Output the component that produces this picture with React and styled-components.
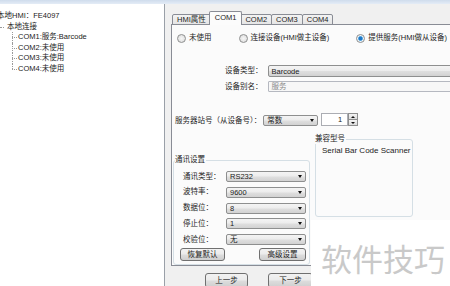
import React from "react";
import styled, { createGlobalStyle } from "styled-components";

const GlobalStyle = createGlobalStyle`
  html, body {
    margin: 0;
    padding: 0;
  }
  body {
    width: 450px;
    height: 286px;
    overflow: hidden;
    background: #f0f0f0;
    font-family: "Liberation Sans", "Noto Sans CJK SC", sans-serif;
    font-size: 7.5px;
    color: #1b1b1b;
  }
  * {
    box-sizing: border-box;
  }
`;

const Screen = styled.div`
  position: relative;
  width: 450px;
  height: 286px;
  display: flex;
  flex-direction: column;
  overflow: hidden;
`;

const TitleEdge = styled.div`
  flex: none;
  height: 4px;
  background: linear-gradient(#cfdcec, #e4ecf6);
`;

const Main = styled.div`
  flex: 1;
  display: flex;
  min-height: 0;
`;

const TreePanel = styled.div`
  flex: none;
  width: 165px;
  background: #fff;
  border-right: 1px solid #9aa0a8;
  padding-top: 7px;
`;

const TreeRow = styled.div`
  position: relative;
  height: 10.5px;
  line-height: 10.5px;
  white-space: nowrap;
  padding-left: ${(p) => p.$indent}px;
`;

const ChildRow = styled(TreeRow)`
  &::before {
    content: "";
    position: absolute;
    left: 12px;
    top: 0;
    height: ${(p) => (p.$last ? "50%" : "100%")};
    border-left: 1px dotted #9a9a9a;
  }
  &::after {
    content: "";
    position: absolute;
    left: 12px;
    top: 50%;
    width: 5px;
    border-top: 1px dotted #9a9a9a;
  }
`;

const ParentRow = styled(TreeRow)`
  &::before {
    content: "";
    position: absolute;
    left: 0;
    top: 50%;
    width: 4px;
    border-top: 1px dotted #9a9a9a;
  }
`;

const Work = styled.div`
  flex: 1;
  min-width: 0;
  display: flex;
  flex-direction: column;
  padding: 7px 0 0 6px;
`;

const TabBar = styled.div`
  display: flex;
  align-items: flex-end;
  height: 14px;
  padding-left: 1px;
  margin-bottom: -1px;
  position: relative;
  z-index: 1;
`;

const Tab = styled.div`
  height: ${(p) => (p.$active ? 14 : 11)}px;
  line-height: ${(p) => (p.$active ? 12 : 10)}px;
  padding: 0 ${(p) => (p.$active ? 5 : 4)}px;
  margin: 0 ${(p) => (p.$active ? -1 : 0)}px;
  margin-right: ${(p) => (p.$active ? -2 : -1)}px;
  border: 1px solid #898c95;
  border-bottom: ${(p) => (p.$active ? "none" : "1px solid #898c95")};
  border-radius: 2px 2px 0 0;
  background: ${(p) =>
    p.$active ? "#fcfcfc" : "linear-gradient(#f3f3f3, #e5e5e5)"};
  position: relative;
  z-index: ${(p) => (p.$active ? 2 : 1)};
  white-space: nowrap;
`;

const TabPanel = styled.div`
  height: 247px;
  border: 1px solid #898c95;
  border-right: none;
  background: #fbfbfb;
  padding-left: 0;
  display: flex;
  flex-direction: column;
`;

const RadioRow = styled.div`
  display: flex;
  gap: 27px;
  margin: 8px 0 0 5px;
  height: 10px;
  line-height: 10px;
`;

const Radio = styled.div`
  display: flex;
  align-items: center;
  gap: 3px;
  white-space: nowrap;
  &::before {
    content: "";
    width: 7px;
    height: 7px;
    border-radius: 50%;
    border: 1px solid #8e8f8f;
    background: ${(p) =>
      p.$checked
        ? "radial-gradient(circle, #1f78c8 0 1.6px, #6fb6e6 2.2px, #eef3f8 2.8px)"
        : "radial-gradient(circle, #f6f6f6, #d9d9d9)"};
  }
`;

const FormGrid = styled.div`
  display: grid;
  grid-template-columns: auto 200px;
  column-gap: 5px;
  row-gap: 4px;
  margin: 22px 0 0 53px;
  align-items: center;
`;

const FieldLabel = styled.div`
  line-height: 10px;
  white-space: nowrap;
`;

const Select = styled.div`
  display: flex;
  align-items: center;
  justify-content: space-between;
  width: ${(p) => p.$w}px;
  height: ${(p) => p.$h || 11}px;
  padding: 0 3px;
  border: 1px solid #8e8f8f;
  border-radius: 2px;
  background: linear-gradient(#f4f4f4 0%, #ececec 48%, #dfdfdf 52%, #d2d2d2 100%);
  line-height: 9px;
  white-space: nowrap;
  &::after {
    content: "";
    border-left: 2.5px solid transparent;
    border-right: 2.5px solid transparent;
    border-top: 3px solid #111;
  }
`;

const TextField = styled.div`
  height: 11px;
  padding: 0 3px;
  border: 1px solid #b5b8c0;
  border-radius: 1px;
  background: #f7f7f7;
  color: #8a8a8a;
  line-height: 9px;
`;

const ServerRow = styled.div`
  display: flex;
  align-items: flex-end;
  margin: 21px 0 0 3px;
`;

const ServerLabel = styled.div`
  line-height: 10px;
  white-space: nowrap;
  margin-right: 2px;
`;

const Spinner = styled.div`
  display: flex;
  margin-left: 3px;
  height: 13px;
`;

const SpinInput = styled.div`
  width: 27px;
  height: 13px;
  border: 1px solid #abadb3;
  background: #fff;
  text-align: right;
  padding-right: 5px;
  line-height: 11px;
`;

const SpinButtons = styled.div`
  display: flex;
  flex-direction: column;
  width: 10px;
`;

const SpinButton = styled.div`
  flex: 1;
  display: flex;
  align-items: center;
  justify-content: center;
  border: 1px solid #8e8f8f;
  border-top-width: ${(p) => (p.$down ? 0 : 1)}px;
  background: linear-gradient(#f4f4f4, #dcdcdc);
  &::after {
    content: "";
    border-left: 2px solid transparent;
    border-right: 2px solid transparent;
    ${(p) =>
      p.$down ? "border-top: 2.5px solid #111;" : "border-bottom: 2.5px solid #111;"}
  }
`;

const Columns = styled.div`
  display: flex;
  align-items: flex-start;
  gap: 5px;
  margin-left: 1px;
`;

const GroupBox = styled.fieldset`
  margin: ${(p) => p.$top}px 0 0 0;
  padding: 0;
  width: ${(p) => p.$w}px;
  height: ${(p) => p.$h}px;
  border: 1px solid #d5dfe5;
  border-radius: 3px;
  min-width: 0;
`;

const GroupTitle = styled.legend`
  padding: 0 1px 0 0;
  margin-left: ${(p) => p.$offset}px;
  line-height: 10px;
`;

const CommBody = styled.div`
  padding: 6px 3px 0 6px;
`;

const CommGrid = styled.div`
  display: grid;
  grid-template-columns: 43px 80px;
  row-gap: 4.75px;
  align-items: center;
  margin-left: 3px;
`;

const ButtonRow = styled.div`
  display: flex;
  justify-content: space-between;
  margin-top: 3px;
`;

const Button = styled.div`
  width: ${(p) => p.$w}px;
  height: ${(p) => p.$h || 13}px;
  border: 1px solid #707070;
  border-radius: 3px;
  background: linear-gradient(#f2f2f2 0%, #ebebeb 48%, #dddddd 52%, #cfcfcf 100%);
  display: flex;
  align-items: center;
  justify-content: center;
  white-space: nowrap;
  line-height: 10px;
`;

const ModelText = styled.div`
  padding: 2px 0 0 6px;
  font-size: 8px;
  line-height: 10px;
  white-space: nowrap;
`;

const NavRow = styled.div`
  display: flex;
  gap: 20px;
  margin: 7px 0 0 34px;
`;

const Watermark = styled.div`
  position: absolute;
  right: 0;
  bottom: 0;
  width: 139px;
  height: 66px;
  background: #fff;
  padding: 21px 0 0 10px;
  font-family: "Noto Sans CJK SC", sans-serif;
  font-size: 31px;
  line-height: 34px;
  color: #c9c9c9;
  white-space: nowrap;
`;

const commRows = [
  ["通讯类型：", "RS232"],
  ["波特率：", "9600"],
  ["数据位：", "8"],
  ["停止位：", "1"],
  ["校验位：", "无"],
];

const ports = ["COM1:服务:Barcode", "COM2:未使用", "COM3:未使用", "COM4:未使用"];

const App = () => {
  return (
    <Screen>
      <GlobalStyle />
      <TitleEdge />
      <Main>
        <TreePanel>
          <TreeRow $indent={0} style={{ marginLeft: -3 }}>
            本地HMI：FE4097
          </TreeRow>
          <ParentRow $indent={7}>本地连接</ParentRow>
          {ports.map((port, index) => (
            <ChildRow key={port} $indent={18} $last={index === ports.length - 1}>
              {port}
            </ChildRow>
          ))}
        </TreePanel>

        <Work>
          <TabBar>
            <Tab>HMI属性</Tab>
            <Tab $active>COM1</Tab>
            <Tab>COM2</Tab>
            <Tab>COM3</Tab>
            <Tab>COM4</Tab>
          </TabBar>
          <TabPanel>
            <RadioRow>
              <Radio>未使用</Radio>
              <Radio>连接设备(HMI做主设备)</Radio>
              <Radio $checked>提供服务(HMI做从设备)</Radio>
            </RadioRow>

            <FormGrid>
              <FieldLabel>设备类型：</FieldLabel>
              <Select $w={200} $h={12}>Barcode</Select>
              <FieldLabel>设备别名：</FieldLabel>
              <TextField>服务</TextField>
            </FormGrid>

            <ServerRow>
              <ServerLabel>服务器站号（从设备号）：</ServerLabel>
              <Select $w={55}>常数</Select>
              <Spinner>
                <SpinInput>1</SpinInput>
                <SpinButtons>
                  <SpinButton />
                  <SpinButton $down />
                </SpinButtons>
              </Spinner>
            </ServerRow>

            <Columns>
              <GroupBox $top={29} $w={137} $h={110}>
                <GroupTitle $offset={1}>通讯设置</GroupTitle>
                <CommBody>
                  <CommGrid>
                    {commRows.map(([label, value]) => (
                      <React.Fragment key={label}>
                        <FieldLabel>{label}</FieldLabel>
                        <Select $w={80}>{value}</Select>
                      </React.Fragment>
                    ))}
                  </CommGrid>
                  <ButtonRow>
                    <Button $w={45}>恢复默认</Button>
                    <Button $w={47}>高级设置</Button>
                  </ButtonRow>
                </CommBody>
              </GroupBox>
              <GroupBox $top={8} $w={98} $h={83}>
                <GroupTitle $offset={-1}>兼容型号</GroupTitle>
                <ModelText>Serial Bar Code Scanner</ModelText>
              </GroupBox>
            </Columns>
          </TabPanel>
          <NavRow>
            <Button $w={43} $h={15}>上一步</Button>
            <Button $w={45} $h={15}>下一步</Button>
          </NavRow>
        </Work>
      </Main>
      <Watermark>软件技巧</Watermark>
    </Screen>
  );
};

export default App;
